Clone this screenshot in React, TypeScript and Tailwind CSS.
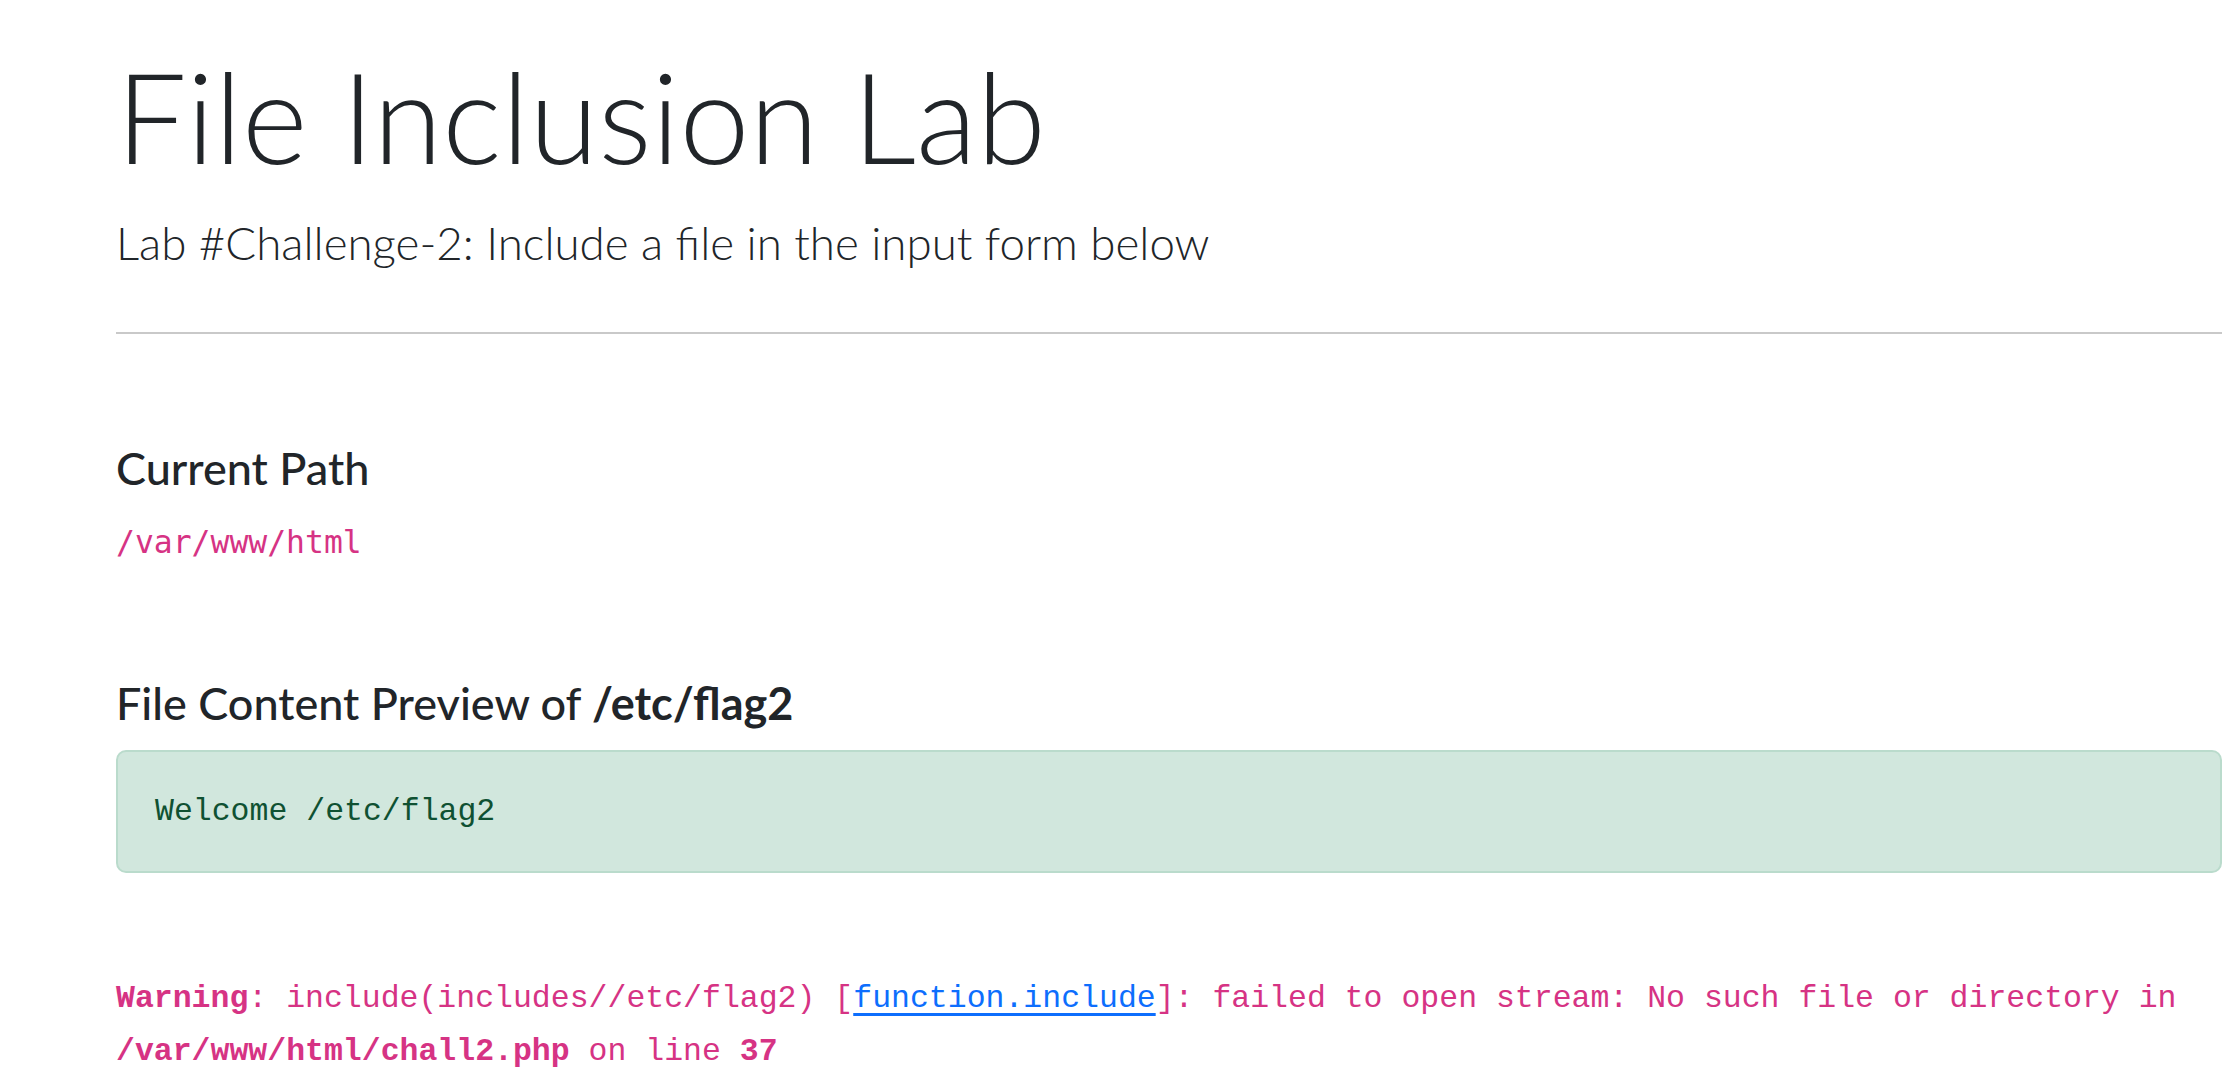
import React from 'react';

const sans = "font-['Lato','Noto_Sans',sans-serif]";
const mono = "font-['Liberation_Mono','DejaVu_Sans_Mono',monospace]";

const App: React.FC = () => {
  return (
    <div className="min-h-screen bg-white pl-[116px] pr-[4px] pt-[46px] text-[#212529]">
      {/* Header */}
      <h1 className={`${sans} text-[125.5px] font-light leading-[140px] h-[140px] whitespace-nowrap`}>
        File Inclusion Lab
      </h1>
      <p className={`${sans} mt-[27px] text-[45.7px] font-light leading-[60px]`}>
        Lab #Challenge-2: Include a file in the input form below
      </p>
      <hr className="mt-[59px] border-0 border-t-2 border-[#c9c9c9]" />

      {/* Current path */}
      <h4 className={`${sans} mt-[104px] text-[45px] font-medium leading-[60px]`}>Current Path</h4>
      <code className="mt-[21px] block font-['DejaVu_Sans_Mono',monospace] text-[31.4px] leading-[47px] text-[#d63384]">
        /var/www/html
      </code>

      {/* Preview */}
      <h4 className={`${sans} mt-[107px] text-[45px] font-medium leading-[60px]`}>
        File Content Preview of <b className="font-bold">/etc/flag2</b>
      </h4>
      <div className="mt-[17px] rounded-[10px] border-2 border-[#badbcc] bg-[#d1e7dd] px-[37px] py-[36px]">
        <pre className={`${mono} text-[31.5px] leading-[47px] text-[#0f5132]`}>Welcome /etc/flag2</pre>
      </div>

      {/* PHP warning */}
      <div className={`${mono} mt-[99px] text-[31.5px] leading-[53px] text-[#d63384]`}>
        <b>Warning</b>: include(includes//etc/flag2) [
        <a href="#" className="text-[#0d6efd] underline underline-offset-[6px]">
          function.include
        </a>
        ]: failed to open stream: No such file or directory in <b>/var/www/html/chall2.php</b> on line <b>37</b>
      </div>
    </div>
  );
};

export default App;
